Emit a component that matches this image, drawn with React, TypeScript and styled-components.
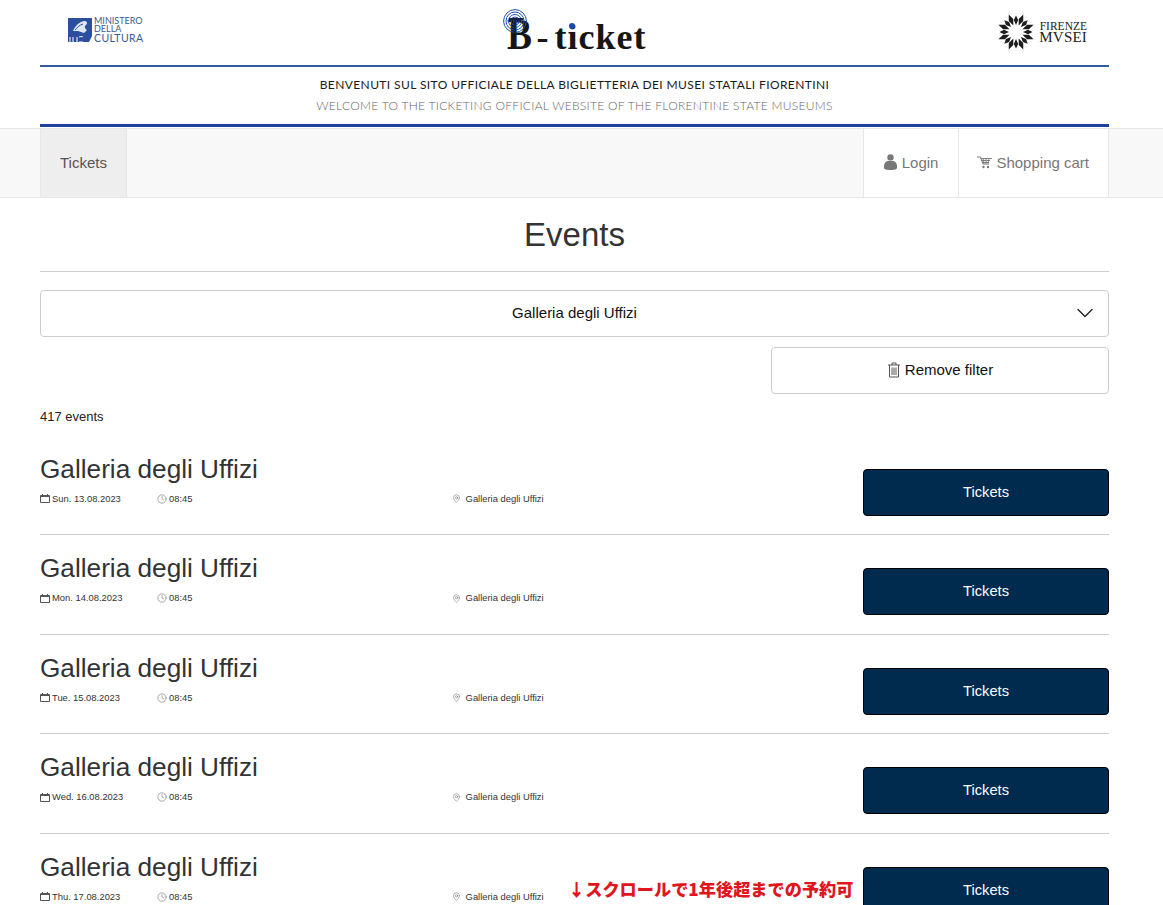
import styled, { createGlobalStyle } from "styled-components";
import { ChevronDown, Clock, MapPin } from "lucide-react";

const GlobalStyle = createGlobalStyle`
	html,
	body {
		height: 905px;
		margin: 0;
		overflow: hidden;
		background: #fff;
		font-family: "Liberation Sans", Arial, sans-serif;
		color: #333;
	}
`;

const Container = styled.div`
	width: 1069px;
	margin-left: 40px;
`;

const LogoBar = styled.header`
	display: grid;
	grid-template-columns: 1fr auto 1fr;
	align-items: center;
	height: 65px;
	border-bottom: 2px solid #2f5c9f;
`;

const MicLogo = styled.div`
	display: flex;
	align-items: center;
	gap: 2px;
	margin: -5px 0 0 28px;
`;

const MicText = styled.div`
	font-family: Lato, sans-serif;
	color: #3a5a94;
	font-size: 9px;
	line-height: 8px;
`;

const MicBig = styled.div`
	font-size: 10.5px;
	line-height: 11px;
	letter-spacing: 0.4px;
`;

const TicketLogo = styled.div`
	position: relative;
	display: flex;
	align-items: baseline;
	align-self: start;
	margin-left: 4px;
	padding-top: 12px;
	font-family: "Liberation Serif", serif;
	font-size: 36px;
	font-weight: 700;
	line-height: 1;
	color: #161616;
`;

const TicketB = styled.span`
	display: inline-block;
	width: 30px;
	font-size: 45px;
	transform: scaleX(0.83);
	transform-origin: left;
`;

const TicketWord = styled.span`
	margin-left: 6px;
	letter-spacing: 1px;
`;

const Signal = styled.svg`
	position: absolute;
	top: 9px;
	left: -4px;
`;

const BlueDot = styled.span`
	position: absolute;
	top: 23px;
	left: 62px;
	width: 6px;
	height: 6px;
	background: #1a49b0;
	border-radius: 50%;
`;

const MuseiLogo = styled.div`
	display: flex;
	align-items: center;
	justify-self: end;
	gap: 4px;
	margin: -2px 22px 0 0;
	font-family: "Liberation Serif", serif;
	color: #222;
`;

const MuseiText = styled.div`
	font-size: 11.5px;
	line-height: 10px;
	text-align: right;
`;

const MuseiBig = styled.div`
	font-size: 15px;
	line-height: 12px;
	letter-spacing: 0.2px;
`;

const Welcome = styled.div`
	height: 60px;
	padding-top: 7px;
	box-sizing: border-box;
	border-bottom: 3px solid #1f3f9f;
	text-align: center;
	font-family: Lato, sans-serif;
	font-size: 12px;
`;

const WelcomeLine = styled.div<{ $muted?: boolean }>`
	height: 21px;
	line-height: 21px;
	font-weight: ${({ $muted }) => ($muted ? 300 : 400)};
	letter-spacing: ${({ $muted }) => ($muted ? "0.3px" : "0.4px")};
	color: ${({ $muted }) => ($muted ? "#666" : "#1a1a1a")};
`;

const NavBar = styled.nav`
	height: 70px;
	margin-top: 1px;
	box-sizing: border-box;
	background: #f8f8f8;
	border-top: 1px solid #e7e7e7;
	border-bottom: 1px solid #e7e7e7;
`;

const NavInner = styled(Container)`
	display: flex;
	justify-content: space-between;
	height: 100%;
`;

const NavGroup = styled.div`
	display: flex;
`;

const NavItem = styled.a<{ $active?: boolean }>`
	display: flex;
	align-items: center;
	gap: 4px;
	padding: 0 19px 2px;
	font-size: 15px;
	color: ${({ $active }) => ($active ? "#555" : "#777")};
	background: ${({ $active }) => ($active ? "#eee" : "#fff")};
	border-left: 1px solid #e7e7e7;
	border-right: 1px solid #e7e7e7;

	& + & {
		border-left: 0;
	}
`;

const LoginItem = styled(NavItem)`
	padding: 0 20px 2px;
`;

const UserSvg = styled.svg`
	margin-right: 1px;
`;

const CartSvg = styled.svg`
	margin-left: -1px;
`;

const Title = styled.h1`
	height: 74px;
	margin: 0;
	box-sizing: border-box;
	font-size: 33px;
	font-weight: 400;
	line-height: 74px;
	text-align: center;
	border-bottom: 1px solid #ccc;
`;

const SelectBox = styled.div`
	position: relative;
	height: 47px;
	margin-top: 18px;
	box-sizing: border-box;
	font-size: 15px;
	line-height: 44px;
	text-align: center;
	color: #111;
	background: #fff;
	border: 1px solid #ccc;
	border-radius: 4px;
`;

const Chevron = styled(ChevronDown)`
	position: absolute;
	top: 8px;
	right: 9px;
`;

const FilterRow = styled.div`
	display: flex;
	justify-content: flex-end;
	margin-top: 10px;
`;

const FilterButton = styled.button`
	display: flex;
	align-items: center;
	justify-content: center;
	gap: 4px;
	width: 338px;
	height: 47px;
	padding-bottom: 3px;
	font-family: inherit;
	font-size: 15px;
	color: #111;
	background: #fff;
	border: 1px solid #ccc;
	border-radius: 4px;
`;

const Count = styled.div`
	margin-top: 15px;
	font-size: 13px;
	line-height: 16px;
	color: #222;
`;

const EventList = styled.div`
	margin-top: 10.5px;
`;

const EventRow = styled.article`
	display: flex;
	justify-content: space-between;
	height: 99.5px;
	padding-top: 19.2px;
	box-sizing: border-box;
	border-bottom: 1px solid #ccc;
`;

const EventInfo = styled.div`
	flex: 1;
`;

const EventTitle = styled.h2`
	margin: 0;
	font-size: 26.2px;
	font-weight: 400;
	line-height: 29px;
`;

const Meta = styled.div`
	display: grid;
	grid-template-columns: 117px 295px auto;
	margin-top: 9px;
	font-size: 9.4px;
	line-height: 12px;
	color: #333;
`;

const MetaItem = styled.span`
	display: flex;
	align-items: center;
	gap: 2px;
	white-space: pre;

	svg {
		flex: none;
		color: #555;
	}
`;

const TicketButton = styled.button`
	width: 246px;
	height: 47px;
	margin-top: 14.2px;
	font-family: inherit;
	font-size: 14.7px;
	line-height: 17px;
	color: #fff;
	background: #002b4f;
	border: 1px solid #000;
	border-radius: 4px;
`;

const ScrollNote = styled.div`
	position: absolute;
	top: 876px;
	left: 568px;
	font-family: "Noto Sans CJK JP", sans-serif;
	font-size: 17.2px;
	font-weight: 900;
	line-height: 26px;
	color: #e0151d;
`;

const dates = [
	"Sun. 13.08.2023",
	"Mon. 14.08.2023",
	"Tue. 15.08.2023",
	"Wed. 16.08.2023",
	"Thu. 17.08.2023",
];

function Burst() {
	const rays = Array.from({ length: 16 }, (_, i) => i * 22.5);
	return (
		<svg width="38" height="38" viewBox="-19 -19 38 38" aria-hidden="true">
			{rays.map((angle, i) => (
				<polygon
					key={angle}
					fill="#1c1c1c"
					points={i % 2 ? "0,-7 2.400,-13 0,-19 -2.400,-13" : "0,-7 2.200,-12 0,-16.500 -2.200,-12"}
					transform={`rotate(${angle})`}
				/>
			))}
		</svg>
	);
}

function MicMark() {
	return (
		<svg width="24" height="25" viewBox="0 0 24 25" aria-hidden="true">
			<path d="M0 0h24v18l-3 6H0z" fill="#2b4f9e" />
			<path d="M5 13c2-5 6-9 11-10 3 0 4 2 2 4-2 1-1 4 1 5l-3 3-6-2z" fill="#dfe6f3" />
			<path d="M7 12c2-2 4-5 8-6M8 15l7 1" stroke="#2b4f9e" fill="none" />
			<path d="M2 19v5M5 19v5M9 19v5M11 19c3-1 4 0 4 0M11 24h4" stroke="#fff" />
		</svg>
	);
}

function UserIcon() {
	return (
		<UserSvg width="13" height="16" viewBox="0 0 13 16" aria-hidden="true">
			<circle cx="6.500" cy="3.400" r="3.200" fill="#777" />
			<path d="M0 12c0-3 2-5 4-5h5c2 0 4 2 4 5v2c0 1-2 2-6.500 2S0 15 0 14z" fill="#777" />
		</UserSvg>
	);
}

function CartIcon() {
	return (
		<CartSvg width="15" height="13" viewBox="0 0 15 13" fill="none" aria-hidden="true">
			<path d="M0 1h3.500l2.500 7h6" stroke="#777" />
			<path d="M3.500 2.500H15M4 4.500h9M5 6.500h7M6 2.500l1 5M9 2.500v5M12 2.500l-1 5" stroke="#777" strokeWidth="0.9" />
			<circle cx="6.500" cy="11" r="1.200" fill="#777" />
			<circle cx="11" cy="11" r="1.200" fill="#777" />
		</CartSvg>
	);
}

function TrashIcon() {
	return (
		<svg width="14" height="16" viewBox="0 0 14 16" fill="none" stroke="#555" aria-hidden="true">
			<path d="M1 3h12M5 3V1h4v2M2.500 3v12h9V3M5 5.500v7.500M7 5.500v7.500M9 5.500v7.500" />
		</svg>
	);
}

function CalendarIcon() {
	return (
		<svg width="10" height="9" viewBox="0 0 10 9" fill="none" stroke="#555" aria-hidden="true">
			<path d="M0.500 1.500h9v7h-9z" />
			<path d="M0.500 2.500h9M2.500 0v1.500M7.500 0v1.500" />
		</svg>
	);
}

export default function App() {
	return (
		<>
			<GlobalStyle />
			<Container>
				<LogoBar>
					<MicLogo>
						<MicMark />
						<MicText>
							MINISTERO
							<div>DELLA</div>
							<MicBig>CULTURA</MicBig>
						</MicText>
					</MicLogo>
					<TicketLogo>
						<TicketB>B</TicketB>
						<span>-</span>
						<TicketWord>ticket</TicketWord>
						<Signal width="24" height="24" viewBox="0 0 24 24" fill="none" stroke="#1f4fa8" aria-hidden="true">
							<circle cx="12" cy="12" r="11.400" />
							<circle cx="12" cy="12" r="9" />
							<circle cx="12" cy="12" r="6.500" />
							<circle cx="12" cy="12" r="4" />
							<circle cx="12" cy="12" r="1.500" />
							<path d="M6 10h14M12 10v14" stroke="#16233f" strokeWidth="2" />
						</Signal>
						<BlueDot />
					</TicketLogo>
					<MuseiLogo>
						<Burst />
						<MuseiText>
							FIRENZE
							<MuseiBig>MVSEI</MuseiBig>
						</MuseiText>
					</MuseiLogo>
				</LogoBar>
				<Welcome>
					<WelcomeLine>BENVENUTI SUL SITO UFFICIALE DELLA BIGLIETTERIA DEI MUSEI STATALI FIORENTINI</WelcomeLine>
					<WelcomeLine $muted>WELCOME TO THE TICKETING OFFICIAL WEBSITE OF THE FLORENTINE STATE MUSEUMS</WelcomeLine>
				</Welcome>
			</Container>
			<NavBar>
				<NavInner>
					<NavGroup>
						<NavItem $active>Tickets</NavItem>
					</NavGroup>
					<NavGroup>
						<LoginItem>
							<UserIcon />
							Login
						</LoginItem>
						<NavItem>
							<CartIcon />
							Shopping cart
						</NavItem>
					</NavGroup>
				</NavInner>
			</NavBar>
			<Container>
				<Title>Events</Title>
				<SelectBox>
					Galleria degli Uffizi
					<Chevron size={28} strokeWidth={1.2} color="#222" />
				</SelectBox>
				<FilterRow>
					<FilterButton>
						<TrashIcon />
						Remove filter
					</FilterButton>
				</FilterRow>
				<Count>417 events</Count>
				<EventList>
					{dates.map((date) => (
						<EventRow key={date}>
							<EventInfo>
								<EventTitle>Galleria degli Uffizi</EventTitle>
								<Meta>
									<MetaItem>
										<CalendarIcon />
										{date}
									</MetaItem>
									<MetaItem>
										<Clock size={10} strokeWidth={1.2} />
										08:45
									</MetaItem>
									<MetaItem>
										<MapPin size={9} strokeWidth={1.2} />
										{" Galleria degli Uffizi"}
									</MetaItem>
								</Meta>
							</EventInfo>
							<TicketButton>Tickets</TicketButton>
						</EventRow>
					))}
				</EventList>
			</Container>
			<ScrollNote>↓スクロールで1年後超までの予約可</ScrollNote>
		</>
	);
}
